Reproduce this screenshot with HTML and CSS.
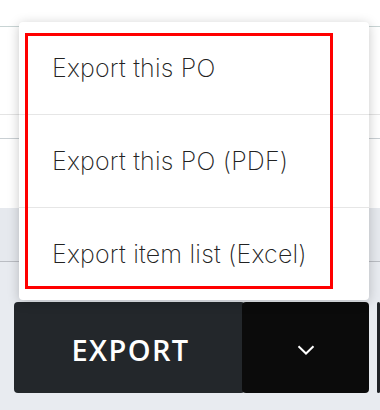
FILE: index.html
```html
<!DOCTYPE html>
<html lang="en">
<head>
    <meta charset="UTF-8">
    <meta name="viewport" content="width=device-width, initial-scale=1.0">
    <title>Export</title>
    <link rel="stylesheet" href="styles.css">
</head>
<body>
<div class="page">
    <div class="row row-head"></div>
    <div class="row row-a"></div>
    <div class="row row-b"></div>
    <div class="row row-c"></div>
    <div class="band"></div>
    <div class="footer">
        <div class="btn-group">
            <a href="javascript:;" class="btn btn-export">EXPORT</a>
            <a href="javascript:;" class="btn btn-toggle">
                <svg width="18" height="10" viewBox="0 0 18 10"><path d="M1.5 1.2 L9 8.5 L16.5 1.2" fill="none" stroke="#fff" stroke-width="2"/></svg>
            </a>
        </div>
        <a href="javascript:;" class="btn btn-next"></a>
    </div>

    <div class="menu">
        <ul>
            <li><a href="javascript:;">Export this PO</a></li>
            <li><a href="javascript:;">Export this PO (PDF)</a></li>
            <li><a href="javascript:;">Export item list (Excel)</a></li>
        </ul>
        <div class="mark"></div>
    </div>
</div>
</body>
</html>
```

FILE: styles.css
```css
*{
    margin: 0;
    padding: 0;
    box-sizing: border-box;
}
body{
    background: #e8ebf0;
    font-family: "Inter", "Liberation Sans", sans-serif;
}
.page{
    position: relative;
    width: 380px;
    height: 410px;
    overflow: hidden;
}
.row{
    background: #fff;
}
.row-head{
    height: 27px;
    border-bottom: 1px solid #c8d4d4;
}
.row-a{
    height: 88px;
    border-bottom: 1px solid #e4e4e4;
}
.row-b{
    height: 24px;
    border-bottom: 1px solid #c9cfd3;
}
.row-c{
    height: 69px;
}
.band{
    height: 54px;
    background: #e6e9ee;
    border-bottom: 1px solid #babdc3;
}
.footer{
    display: flex;
    padding: 40px 0 0 14px;
    gap: 8px;
}
.btn-group{
    display: flex;
}
.btn{
    display: flex;
    align-items: center;
    justify-content: center;
    height: 91px;
    border-radius: 4px;
    text-decoration: none;
}
.btn-export{
    width: 231px;
    background: #23272b;
    color: #fff;
    font-family: "Open Sans", sans-serif;
    font-weight: 600;
    font-size: 29px;
    letter-spacing: 1.4px;
    padding: 3px 0 0 2px;
}
.btn-toggle{
    width: 127px;
    margin-left: -3px;
    background: #0b0b0b;
    padding-top: 5px;
}
.btn-next{
    width: 40px;
    background: #1f2226;
}

/* dropdown */
.menu{
    position: absolute;
    left: 19px;
    top: 22px;
    width: 350px;
    height: 278px;
    background: #fff;
    border-radius: 4px;
    box-shadow: 0 2px 12px rgba(0,0,0,0.22);
}
.menu ul{
    list-style: none;
}
.menu li{
    display: flex;
    align-items: center;
    height: 93px;
    padding-left: 33px;
    border-bottom: 1px solid #e6e6e6;
}
.menu li:last-child{
    height: 92px;
    border-bottom: none;
}
.menu li a{
    color: #222;
    font-size: 25px;
    font-weight: 250;
    letter-spacing: 0.2px;
    line-height: 30px;
    text-decoration: none;
}
.menu .mark{
    position: absolute;
    left: 6px;
    top: 11px;
    width: 308px;
    height: 256px;
    border: 3px solid #ff0000;
}
```
